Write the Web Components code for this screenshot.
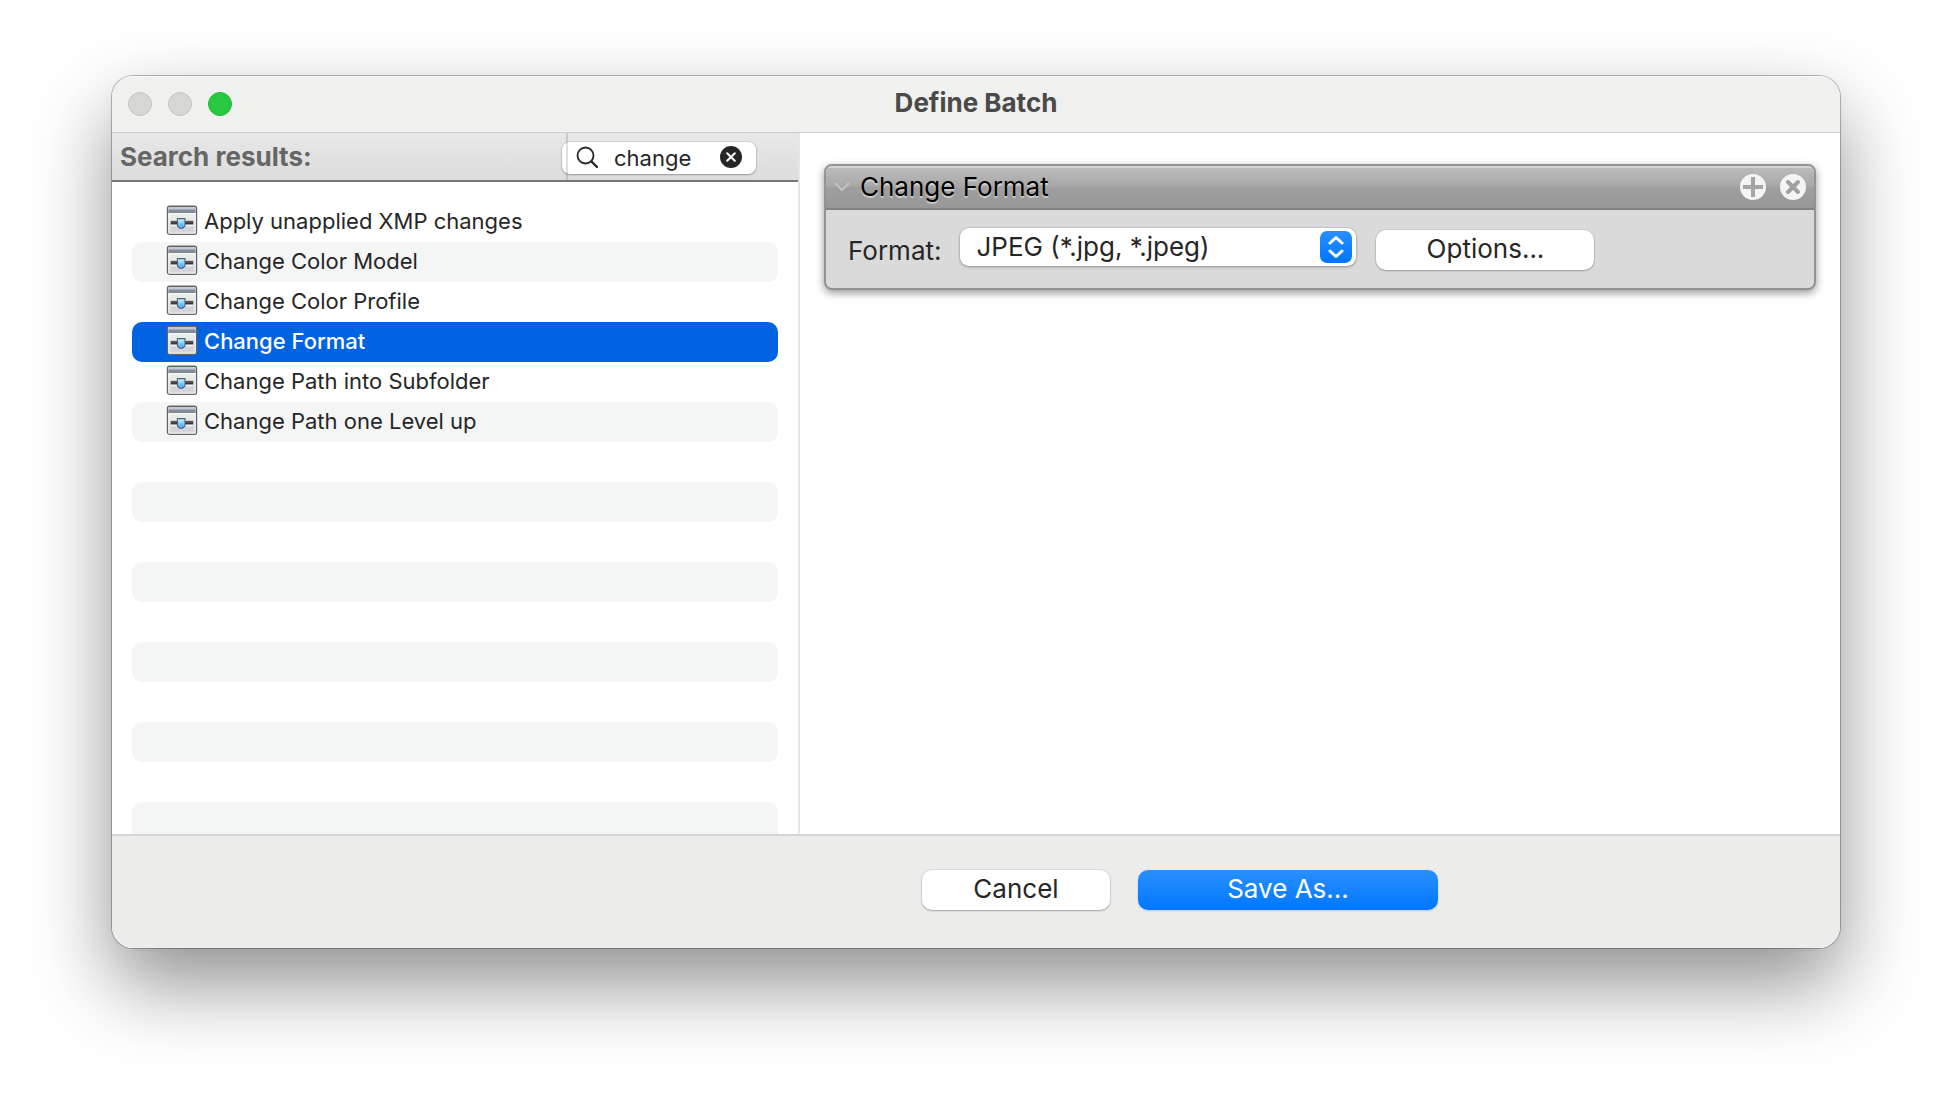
<!DOCTYPE html>
<html lang="en">
<head>
<meta charset="utf-8">
<title>Define Batch</title>
<style>
  html { background: #fff; }
  body {
    margin: 0; box-sizing: border-box; height: 100vh; min-height: 600px;
    padding: 76px 112px 148px; display: flex;
    font-family: Inter, "Liberation Sans", sans-serif; font-size: 26px; line-height: 32px; color: #262626;
  }
</style>
</head>
<body>
<batch-window heading="Define Batch">
  <search-pane slot="side">
    <batch-row>Apply unapplied XMP changes</batch-row>
    <batch-row>Change Color Model</batch-row>
    <batch-row>Change Color Profile</batch-row>
    <batch-row selected>Change Format</batch-row>
    <batch-row>Change Path into Subfolder</batch-row>
    <batch-row>Change Path one Level up</batch-row>
    <batch-row empty></batch-row>
    <batch-row empty></batch-row>
    <batch-row empty></batch-row>
    <batch-row empty></batch-row>
    <batch-row empty></batch-row>
    <batch-row empty></batch-row>
    <batch-row empty></batch-row>
    <batch-row empty></batch-row>
    <batch-row empty></batch-row>
    <batch-row empty></batch-row>
  </search-pane>
  <action-card heading="Change Format">
    <format-form></format-form>
  </action-card>
  <push-button slot="footer" style="--w:188px">Cancel</push-button>
  <push-button slot="footer" primary style="--w:300px">Save As...</push-button>
</batch-window>

<script>
const define = (name, html, setup) => {
  const template = document.createElement('template');
  template.innerHTML = html;
  customElements.define(name, class extends HTMLElement {
    connectedCallback() {
      if (this.shadowRoot) return;
      this.attachShadow({ mode: 'open' }).append(template.content.cloneNode(true));
      if (setup) setup(this, this.shadowRoot);
    }
  });
};
const fillHeading = (host, root) => {
  root.querySelector('.heading').textContent = host.getAttribute('heading');
};

define('batch-window', `
<style>
  :host {
    flex: 1; min-width: 0; display: flex; flex-direction: column; overflow: hidden;
    border-radius: 21px; background: #fff;
    box-shadow: 0 0 0 1px rgba(0,0,0,.26), 0 36px 80px rgba(0,0,0,.44), 0 0 6px rgba(0,0,0,.04);
  }
  header {
    flex: none; height: 56px; display: grid; grid-template-columns: 1fr auto 1fr; align-items: center;
    background: #f0f0ee; border-bottom: 1px solid #d0d0ce; box-shadow: inset 0 1px #fafafa;
  }
  .lights { display: flex; gap: 16px; padding-left: 16px; }
  .lights button {
    width: 24px; height: 24px; padding: 0; border-radius: 50%;
    border: 1px solid #c4c4c3; background: #d7d7d5;
  }
  .lights .zoom { background: #28c940; border-color: #20b636; }
  h1 { margin: 0; padding-bottom: 2px; font-size: 26px; line-height: 32px; font-weight: 700; color: #494947; }
  main { flex: 1; min-height: 0; display: flex; }
  .content { flex: 1; min-width: 0; padding: 31px 24px; border-left: 2px solid #e6e6e6; }
  footer {
    flex: none; display: flex; justify-content: center; gap: 28px;
    padding: 34px 0 38px 408px; background: #ececea; border-top: 2px solid #d5d5d3;
  }
</style>
<header>
  <div class="lights">
    <button type="button" aria-label="Close"></button>
    <button type="button" aria-label="Minimize"></button>
    <button type="button" class="zoom" aria-label="Zoom"></button>
  </div>
  <h1 class="heading"></h1>
</header>
<main>
  <slot name="side"></slot>
  <section class="content"><slot></slot></section>
</main>
<footer><slot name="footer"></slot></footer>`, fillHeading);

define('search-pane', `
<style>
  :host { flex: 0 0 686px; display: flex; flex-direction: column; min-height: 0; }
  .bar {
    flex: none; display: flex; align-items: center; height: 47px; padding: 0 42px 0 8px;
    background: linear-gradient(#e8e8e8, #dcdcdc); border-bottom: 2px solid #777; position: relative;
  }
  label { flex: 1; font-size: 26px; line-height: 32px; font-weight: 700; color: #666; }
  .field {
    box-sizing: border-box; width: 194px; height: 32px; display: flex; align-items: center;
    margin-top: 2px; padding: 0 14px; border-radius: 8px; background: #fff;
    box-shadow: 0 0 0 1px rgba(0,0,0,.08), 0 1px 2px rgba(0,0,0,.25);
  }
  .field svg { flex: none; display: block; }
  input {
    flex: 1; min-width: 0; height: 28px; padding: 0 0 0 14px; border: 0; outline: 0; background: none;
    font: 22px/28px Inter, "Liberation Sans", sans-serif; color: #262626;
  }
  button { flex: none; padding: 0 0 2px; border: 0; background: none; }
  /* the column edge crosses the left end of the search field */
  .edge { position: absolute; right: 230px; top: 0; bottom: 0; width: 2px; background: rgba(0,0,0,.12); }
  .list { flex: 1; min-height: 0; overflow: hidden; padding: 20px 20px 0; }
</style>
<div class="bar">
  <label for="q">Search results:</label>
  <div class="field">
    <svg width="24" height="24" viewBox="0 0 24 24" fill="none" stroke="#262626" stroke-linecap="round">
      <circle cx="9.5" cy="9.5" r="8" stroke-width="1.8"/><path d="M15.500 15.500l5.500 5.500" stroke-width="2.4"/>
    </svg>
    <input id="q" type="text" value="change">
    <button type="button" aria-label="Clear">
      <svg width="22" height="22" viewBox="0 0 22 22"><circle cx="11" cy="11" r="11" fill="#262626"/>
        <path d="M7.2 7.2l7.6 7.6M14.8 7.2l-7.6 7.6" stroke="#fff" stroke-width="2" stroke-linecap="round"/></svg>
    </button>
  </div>
  <div class="edge"></div>
</div>
<div class="list" role="listbox" aria-label="Actions"><slot></slot></div>`);

define('batch-row', `
<style>
  :host {
    display: flex; align-items: center; gap: 6px; height: 40px; box-sizing: border-box;
    padding: 0 0 2px 34px; border-radius: 10px; font-size: 22px; line-height: 28px; color: #262626;
  }
  :host(:nth-child(even)) { background: #f4f5f5; }
  :host([selected]) { background: #0063e1; color: #fff; font-weight: 500; }
  :host([empty]) svg { display: none; }
  svg { flex: none; display: block; }
</style>
<svg width="32" height="32" viewBox="0 0 32 32" aria-hidden="true">
  <defs>
    <linearGradient id="f" x2="0" y2="1"><stop offset="0" stop-color="#f4f4f4"/><stop offset="1" stop-color="#d9dade"/></linearGradient>
    <linearGradient id="k" x2="0" y2="1"><stop offset="0" stop-color="#cdeeff"/><stop offset="1" stop-color="#3aa5ea"/></linearGradient>
    <linearGradient id="b" x2="0" y2="1"><stop offset="0" stop-color="#666"/><stop offset="1" stop-color="#222"/></linearGradient>
  </defs>
  <rect x="1.500" y="1.200" width="29" height="28" rx="2" fill="url(#f)" stroke="#646464" stroke-width="1.4"/>
  <rect x="2.500" y="2" width="27" height="3" fill="#c4c8d0"/>
  <rect x="2.500" y="4.500" width="27" height="3.5" fill="#80889a"/>
  <path d="M3 8.700h26M2.800 8.500v19.800h26.400V8.500" fill="none" stroke="#fff" stroke-width=".8"/>
  <rect x="4" y="21.500" width="24" height="5" fill="#ced0d6" opacity=".7"/>
  <rect x="4.700" y="15.800" width="22.600" height="3.800" fill="url(#b)"/>
  <path d="M4.700 20.200h22.600" stroke="#fff"/>
  <path d="M11.400 13.600h7.600v7.200l-2.200 2.400h-3.200l-2.200-2.400z" fill="url(#k)" stroke="#4e6474" stroke-width="1.1" stroke-linejoin="round"/>
</svg>
<span><slot></slot></span>`, host => {
  if (host.hasAttribute('empty')) { host.setAttribute('aria-hidden', 'true'); return; }
  host.setAttribute('role', 'option');
  host.setAttribute('aria-selected', String(host.hasAttribute('selected')));
});

define('action-card', `
<style>
  :host {
    display: block; overflow: hidden; border: 2px solid #939393; border-radius: 8px; background: #dadada;
    box-shadow: 0 3px 8px rgba(0,0,0,.42);
  }
  header {
    display: flex; align-items: center; height: 42px; padding: 0 8px;
    background: linear-gradient(#bdbdbd 0%, #a9a9a9 46%, #9f9f9f 52%, #979797 100%);
    border-bottom: 2px solid #808080; box-shadow: inset 0 2px rgba(255,255,255,.35);
  }
  svg { display: block; }
  h2 {
    flex: 1; margin: 0 0 0 10px; font-size: 26px; line-height: 32px; font-weight: 400; color: #000;
    text-shadow: 0 2px 1px rgba(255,255,255,.5);
  }
  button { padding: 0; border: 0; background: none; }
  .tools { display: flex; gap: 14px; }
</style>
<header>
  <button type="button" aria-label="Collapse">
    <svg width="16" height="10" viewBox="0 0 16 10" fill="none" stroke="#c4c4c4" stroke-width="2"><path d="M1 1l7 7 7-7"/></svg>
  </button>
  <h2 class="heading"></h2>
  <div class="tools">
    <button type="button" aria-label="Add">
      <svg width="26" height="26" viewBox="0 0 26 26"><circle cx="13" cy="13" r="13" fill="#f4f4f4"/><path d="M13 3v20M3 13h20" stroke="#a5a5a5" stroke-width="4"/></svg>
    </button>
    <button type="button" aria-label="Remove">
      <svg width="26" height="26" viewBox="0 0 26 26"><circle cx="13" cy="13" r="13" fill="#f4f4f4"/><path d="M8 8l10 10M18 8l-10 10" stroke="#a0a0a0" stroke-width="4" stroke-linecap="round"/></svg>
    </button>
  </div>
</header>
<slot></slot>`, fillHeading);

define('format-form', `
<style>
  :host { display: flex; align-items: flex-start; padding: 18px 22px; }
  label { margin: 7px 19px 0 0; }
  .select { display: grid; align-items: center; width: 396px; margin-right: 20px; }
  select, svg { grid-area: 1 / 1; }
  select {
    appearance: none; width: 100%; height: 38px; padding: 0 48px 0 16px; border: 0; border-radius: 9px;
    background: #fff; color: #262626; font: 26px/32px Inter, "Liberation Sans", sans-serif;
    box-shadow: 0 0 0 1px rgba(0,0,0,.06), 0 1px 3px rgba(0,0,0,.3);
  }
  svg { justify-self: end; margin-right: 4px; pointer-events: none; }
  push-button { margin-top: 2px; }
</style>
<label for="format">Format:</label>
<div class="select">
  <select id="format"><option>JPEG (*.jpg, *.jpeg)</option></select>
  <svg width="32" height="32" viewBox="0 0 32 32" aria-hidden="true">
    <defs><linearGradient id="g" x2="0" y2="1"><stop offset="0" stop-color="#2a90ff"/><stop offset="1" stop-color="#0075ff"/></linearGradient></defs>
    <rect width="32" height="32" rx="7" fill="url(#g)"/>
    <path d="M10 12l6-5.500 6 5.500M10 20l6 5.500 6-5.500" fill="none" stroke="#fff" stroke-width="3" stroke-linecap="round" stroke-linejoin="round"/>
  </svg>
</div>
<push-button style="--w:218px">Options...</push-button>`);

define('push-button', `
<style>
  :host { display: block; width: var(--w, auto); }
  button {
    display: block; width: 100%; height: 40px; padding: 0 12px 2px; border: 0; border-radius: 10px;
    background: #fff; color: #262626; font: 26px/32px Inter, "Liberation Sans", sans-serif;
    box-shadow: 0 0 0 1px rgba(0,0,0,.06), 0 1px 2px rgba(0,0,0,.25);
  }
  :host([primary]) button { background: linear-gradient(#2a90ff, #0077ff); color: #fff; box-shadow: 0 1px 2px rgba(0,100,255,.25); }
</style>
<button type="button"><slot></slot></button>`);
</script>
</body>
</html>
